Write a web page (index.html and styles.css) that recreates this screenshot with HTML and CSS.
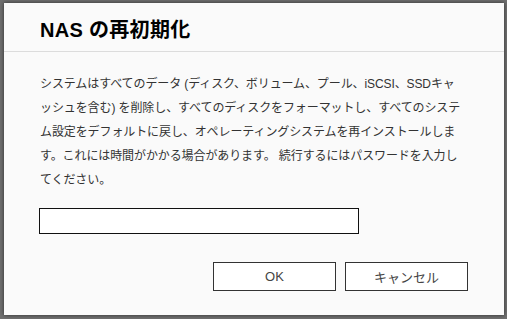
FILE: index.html
```html
<!DOCTYPE html>
<html>
<head>
  <title>NAS の再初期化</title>
  <link rel="stylesheet" href="styles.css">
</head>
<body>
  <div class="backdrop">
    <div class="dialog">
      <div class="dialog-header">
        <h1>NAS の再初期化</h1>
      </div>
      <div class="dialog-body">
        <p class="message">システムはすべてのデータ (ディスク、ボリューム、プール、iSCSI、SSDキャ<br>ッシュを含む) を削除し、すべてのディスクをフォーマットし、すべてのシステ<br>ム設定をデフォルトに戻し、オペレーティングシステムを再インストールしま<br>す。これには時間がかかる場合があります。 続行するにはパスワードを入力し<br>てください。</p>
        <input type="password" class="password" aria-label="パスワード">
        <div class="actions">
          <button class="btn">OK</button>
          <button class="btn">キャンセル</button>
        </div>
      </div>
    </div>
  </div>
</body>
</html>
```

FILE: styles.css
```css
html, body {
  margin: 0;
  padding: 0;
  height: 100%;
}

body {
  background-color: #6f6f6f;
  font-family: "Liberation Sans", "Noto Sans CJK JP", sans-serif;
  color: #222;
}

.backdrop {
  padding: 3px 3px 0 4px;
}

.dialog {
  width: 500px;
  height: 312px;
  box-sizing: border-box;
  background-color: #fafafa;
  box-shadow: 0 0 4px rgba(0, 0, 0, 0.6);
  display: flex;
  flex-direction: column;
}

.dialog-header {
  height: 49px;
  box-sizing: border-box;
  border-bottom: 1px solid #dcdcdc;
  padding: 2px 36px 0 36px;
  display: flex;
  align-items: center;
}

.dialog-header h1 {
  margin: 0;
  font-size: 20px;
  font-weight: bold;
  color: #000;
  letter-spacing: 0.3px;
}

.dialog-body {
  flex: 1;
  padding: 20px 36px 24px 36px;
  display: flex;
  flex-direction: column;
}

.message {
  margin: 0;
  font-size: 12px;
  line-height: 24px;
  color: #333;
  white-space: nowrap;
  letter-spacing: -0.1px;
}

.password {
  margin-top: 16px;
  width: 320px;
  height: 26px;
  box-sizing: border-box;
  border: 1px solid #111;
  background: #fff;
  padding: 0 6px;
  margin-left: -1px;
}

.actions {
  margin-top: auto;
  display: flex;
  justify-content: flex-end;
  gap: 9px;
}

.btn {
  width: 123px;
  height: 29px;
  box-sizing: border-box;
  border: 1px solid #333;
  background: #fff;
  color: #444;
  font-family: "Liberation Sans", "Noto Sans CJK JP", sans-serif;
  font-size: 13px;
  padding: 0;
  cursor: pointer;
}
```
